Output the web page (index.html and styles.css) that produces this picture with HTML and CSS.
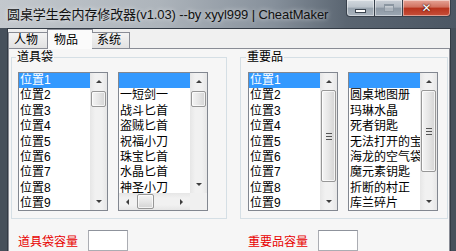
FILE: index.html
```html
<!DOCTYPE html>
<html lang="zh-CN">
<head>
    <meta charset="UTF-8">
    <title>圆桌学生会内存修改器</title>
    <link rel="stylesheet" href="styles.css">
</head>
<body>
    <div class="window">
        <div class="titlebar">
            <div class="title">圆桌学生会内存修改器(v1.03) --by xyyl999 | CheatMaker</div>
            <div class="caption-buttons">
                <div class="cbtn min"><i></i></div>
                <div class="cbtn max"><i></i></div>
                <div class="cbtn close">✕</div>
            </div>
        </div>
        <div class="frame">
            <div class="client">
                <div class="tabs">
                    <div class="tab">人物</div>
                    <div class="tab active">物品</div>
                    <div class="tab">系统</div>
                </div>
                <div class="panel">
                    <!-- 道具袋 -->
                    <div class="column left">
                        <fieldset class="group">
                            <legend>道具袋</legend>
                            <div class="lists">
                                <div class="listbox">
                                    <div class="items">
                                        <div class="item selected">位置1</div>
                                        <div class="item">位置2</div>
                                        <div class="item">位置3</div>
                                        <div class="item">位置4</div>
                                        <div class="item">位置5</div>
                                        <div class="item">位置6</div>
                                        <div class="item">位置7</div>
                                        <div class="item">位置8</div>
                                        <div class="item">位置9</div>
                                    </div>
                                    <div class="vscroll">
                                        <div class="sbtn"><b class="up"></b></div>
                                        <div class="track"><div class="thumb small"></div></div>
                                        <div class="sbtn"><b class="down"></b></div>
                                    </div>
                                </div>
                                <div class="listbox with-h">
                                    <div class="items">
                                        <div class="item selected">&nbsp;</div>
                                        <div class="item">一短剑一</div>
                                        <div class="item">战斗匕首</div>
                                        <div class="item">盗贼匕首</div>
                                        <div class="item">祝福小刀</div>
                                        <div class="item">珠宝匕首</div>
                                        <div class="item">水晶匕首</div>
                                        <div class="item">神圣小刀</div>
                                    </div>
                                    <div class="vscroll">
                                        <div class="sbtn"><b class="up"></b></div>
                                        <div class="track"><div class="thumb small"></div></div>
                                        <div class="sbtn"><b class="down"></b></div>
                                    </div>
                                    <div class="hscroll">
                                        <div class="sbtn"><b class="left"></b></div>
                                        <div class="track"><div class="thumb hsmall"></div></div>
                                        <div class="sbtn"><b class="right"></b></div>
                                    </div>
                                    <div class="corner"></div>
                                </div>
                            </div>
                        </fieldset>
                        <div class="row">
                            <span class="cap">道具袋容量</span>
                            <input type="text" class="field">
                        </div>
                    </div>
                    <!-- 重要品 -->
                    <div class="column right">
                        <fieldset class="group">
                            <legend>重要品</legend>
                            <div class="lists">
                                <div class="listbox">
                                    <div class="items">
                                        <div class="item selected">位置1</div>
                                        <div class="item">位置2</div>
                                        <div class="item">位置3</div>
                                        <div class="item">位置4</div>
                                        <div class="item">位置5</div>
                                        <div class="item">位置6</div>
                                        <div class="item">位置7</div>
                                        <div class="item">位置8</div>
                                        <div class="item">位置9</div>
                                    </div>
                                    <div class="vscroll">
                                        <div class="sbtn"><b class="up"></b></div>
                                        <div class="track"><div class="thumb big"></div></div>
                                        <div class="sbtn"><b class="down"></b></div>
                                    </div>
                                </div>
                                <div class="listbox">
                                    <div class="items">
                                        <div class="item selected">&nbsp;</div>
                                        <div class="item">圆桌地图册</div>
                                        <div class="item">玛琳水晶</div>
                                        <div class="item">死者钥匙</div>
                                        <div class="item">无法打开的宝箱</div>
                                        <div class="item">海龙的空气袋</div>
                                        <div class="item">魔元素钥匙</div>
                                        <div class="item">折断的村正</div>
                                        <div class="item">库兰碎片</div>
                                    </div>
                                    <div class="vscroll">
                                        <div class="sbtn"><b class="up"></b></div>
                                        <div class="track"><div class="thumb mid"></div></div>
                                        <div class="sbtn"><b class="down"></b></div>
                                    </div>
                                </div>
                            </div>
                        </fieldset>
                        <div class="row">
                            <span class="cap">重要品容量</span>
                            <input type="text" class="field">
                        </div>
                    </div>
                </div>
            </div>
        </div>
    </div>
</body>
</html>
```

FILE: styles.css
```css
body {
    margin: 0;
    width: 456px;
    height: 251px;
    overflow: hidden;
    font-family: "Liberation Sans", "Noto Sans CJK SC", sans-serif;
    font-size: 12px;
    background-color: #46505b;
}
.window {
    height: 251px;
    display: flex;
    flex-direction: column;
}
.titlebar {
    height: 28px;
    flex: none;
    display: flex;
    background: linear-gradient(to right, #c3c8cd 0%, #adb4bb 35%, #86909b 60%, #5a6571 76%, #4c5764 100%);
}
.title {
    flex: 1;
    padding-left: 7px;
    line-height: 29px;
    font-size: 13px;
    letter-spacing: -0.1px;
    color: #111;
    white-space: nowrap;
    text-shadow: 0 0 5px rgba(255,255,255,0.8);
}
.caption-buttons {
    display: flex;
    height: 18px;
    margin-right: 5px;
}
.cbtn {
    height: 16px;
    border: 1px solid #38414c;
    border-top: none;
    display: flex;
    align-items: center;
    justify-content: center;
    box-shadow: inset 0 0 0 1px rgba(255,255,255,0.45);
}
.cbtn.min {
    width: 27px;
    border-bottom-left-radius: 4px;
    background: linear-gradient(#d3d9df 0%, #bcc4cc 45%, #98a3ae 50%, #aab4be 100%);
}
.cbtn.max {
    width: 27px;
    border-left: none;
    background: linear-gradient(#c9cfd6 0%, #b0b8c1 45%, #8c97a3 50%, #9da8b3 100%);
}
.cbtn.close {
    width: 47px;
    border-left: none;
    border-bottom-right-radius: 4px;
    background: linear-gradient(#e6a497 0%, #d0705e 45%, #b7321c 50%, #c8503a 100%);
    color: #fff;
    font-family: "DejaVu Sans", sans-serif;
    font-size: 12px;
    font-weight: bold;
    text-shadow: 0 0 2px #3a0b04, 0 0 1px #3a0b04;
}
.min i {
    width: 9px;
    height: 2px;
    margin-top: 6px;
    background-color: #fff;
    border: 1px solid #3c4550;
}
.max i {
    width: 8px;
    height: 5px;
    border: 1px solid #8b96a1;
    border-top-width: 2px;
    background-color: rgba(255,255,255,0.25);
}
.frame {
    flex: 1;
    display: flex;
    padding-left: 7px;
    padding-right: 5px;
    background-color: #46505b;
}
.client {
    width: 442px;
    border: 1px solid #323a44;
    border-bottom: none;
    background-color: #f0f0f0;
    display: flex;
    flex-direction: column;
}
.tabs {
    display: flex;
    align-items: flex-end;
    height: 19px;
    position: relative;
    z-index: 1;
}
.tab {
    height: 15px;
    line-height: 15px;
    padding-left: 5px;
    border: 1px solid #898c95;
    border-bottom: none;
    background: linear-gradient(#f3f3f3, #e2e2e2);
    color: #000;
    box-sizing: content-box;
}
.tab:nth-child(1) { width: 34px; border-right: none; }
.tab:nth-child(3) { width: 32px; border-left: none; }
.tab.active {
    width: 38px;
    height: 19px;
    line-height: 21px;
    padding-left: 6px;
    margin: 0 -1px -1px;
    background: #fbfbfb;
    border-left: 1px solid #898c95;
    border-right: 1px solid #898c95;
}
.panel {
    flex: 1;
    border: 1px solid #898c95;
    border-bottom: none;
    background-color: #f6f6f6;
    display: flex;
    gap: 13px;
    padding-left: 2px;
}
.column {
    display: flex;
    flex-direction: column;
}
.group {
    margin: 1px 0 0;
    padding: 0 0 7px 6px;
    border: 1px solid #d5dfe5;
    min-width: 0;
    box-sizing: border-box;
}
.left .group { width: 216px; }
.right .group { width: 208px; padding-left: 7px; }
.group legend {
    padding: 0 1px;
    margin-left: -2px;
    line-height: 14px;
    color: #000;
}
.lists {
    display: flex;
    gap: 10px;
    padding-top: 8px;
}
.listbox {
    width: 88px;
    height: 137px;
    border: 1px solid #828790;
    background-color: #fff;
    display: grid;
    grid-template-columns: 71px 17px;
    grid-template-rows: 137px;
}
.listbox.with-h {
    grid-template-rows: 120px 17px;
}
.items {
    overflow: hidden;
}
.item {
    height: 15.4px;
    line-height: 15.4px;
    padding-left: 1px;
    white-space: nowrap;
    color: #000;
}
.item.selected {
    background-color: #3399ff;
    color: #fff;
}
.vscroll {
    display: flex;
    flex-direction: column;
    background: linear-gradient(to right, #e6e6e6, #f1f1f1 30%, #f1f1f1 70%, #e6e6e6);
}
.hscroll {
    display: flex;
    background: linear-gradient(#e6e6e6, #f1f1f1 30%, #f1f1f1 70%, #e6e6e6);
}
.sbtn {
    width: 17px;
    height: 17px;
    flex: none;
    display: flex;
    align-items: center;
    justify-content: center;
}
.track {
    flex: 1;
    display: flex;
    flex-direction: column;
    align-items: center;
}
.hscroll .track {
    flex-direction: row;
}
.corner {
    background-color: #f0f0f0;
}
.thumb {
    width: 13px;
    border: 1px solid #979797;
    border-radius: 2px;
    background: linear-gradient(to right, #f5f5f5, #e6e6e6 50%, #d4d4d4);
    box-shadow: inset 0 0 0 1px rgba(255,255,255,0.7);
    display: flex;
    align-items: center;
    justify-content: center;
}
.thumb.small { height: 14px; margin-top: 1px; }
.thumb.big { height: 90px; }
.thumb.mid { height: 80px; }
.thumb.hsmall {
    width: 15px;
    height: 13px;
    margin-left: 1px;
    background: linear-gradient(#f5f5f5, #e6e6e6 50%, #d4d4d4);
}
.thumb.big::after, .thumb.mid::after {
    content: "";
    width: 6px;
    height: 5px;
    border-top: 1px solid #555;
    border-bottom: 1px solid #555;
    background: linear-gradient(transparent 2px, #555 2px, #555 3px, transparent 3px);
}
.sbtn b {
    width: 0;
    height: 0;
    border: 3px solid transparent;
}
.sbtn b.up { border-bottom: 3px solid #3e3e3e; border-top-width: 0; }
.sbtn b.down { border-top: 3px solid #3e3e3e; border-bottom-width: 0; }
.sbtn b.left { border-right: 3px solid #3e3e3e; border-left-width: 0; }
.sbtn b.right { border-left: 3px solid #3e3e3e; border-right-width: 0; }
.row {
    display: flex;
    align-items: center;
    gap: 10px;
    margin-top: 11px;
    padding-left: 7px;
}
.right .row { padding-left: 8px; }
.cap {
    width: 60px;
    color: #e80000;
    white-space: nowrap;
}
.field {
    width: 40px;
    height: 21px;
    margin: 0;
    padding: 0;
    border: 1px solid #abadb3;
    border-top-color: #8f939c;
    box-sizing: border-box;
    background-color: #fff;
}
```
